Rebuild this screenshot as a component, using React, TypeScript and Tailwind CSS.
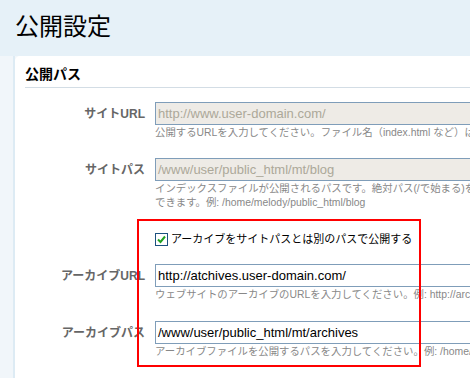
import React from "react";

const font = "font-['Liberation_Sans','Noto_Sans_CJK_JP',sans-serif]";

function Field({
  label,
  value,
  disabled,
  children,
  className,
}: {
  label: string;
  value: string;
  disabled?: boolean;
  children: React.ReactNode;
  className?: string;
}) {
  return (
    <div className={`grid grid-cols-[120px_1fr] gap-x-[10px] ${className ?? ""}`}>
      <div className="flex h-[23px] items-center justify-end text-[12px] font-bold text-[#666]">{label}</div>
      <div
        className={`flex h-[23px] w-[420px] items-center border border-[#7f9db9] px-[2px] text-[13px] whitespace-nowrap ${
          disabled ? "bg-[#eeebe6] text-[#aca899]" : "bg-white text-black"
        }`}
      >
        {value}
      </div>
      <div />
      <div className="mt-[1px] text-[10.4px] leading-[14px] whitespace-nowrap text-[#888]">{children}</div>
    </div>
  );
}

export default function App() {
  return (
    <div className={`relative h-[378px] w-[470px] overflow-hidden bg-[#f3f7fa] ${font}`}>
      {/* Header */}
      <header className="h-[56px] bg-[#e6f1f8] pt-[12px] pl-[15px] text-[24px] leading-[30px] text-black">
        公開設定
      </header>
      <div className="flex">
        {/* Left strip */}
        <div className="h-[322px] w-[15px] shrink-0 border-r-2 border-[#ddebf4] bg-[#f1f6fa]" />
        {/* Panel */}
        <section className="w-[600px] shrink-0 rounded-tl-[5px] bg-white pt-[10px] pl-[10px]">
          <h2 className="border-b border-[#d3dde5] pb-[5px] text-[14px] leading-[16px] font-bold text-black">公開パス</h2>

          <Field label="サイトURL" value="http://www.user-domain.com/" disabled className="mt-[14px]">
            公開するURLを入力してください。ファイル名（index.html など）は含めないでください。
          </Field>

          <Field label="サイトパス" value="/www/user/public_html/mt/blog" disabled className="mt-[18px]">
            インデックスファイルが公開されるパスです。絶対パス(/で始まる)を推奨しますが、相対パスも使用
            <br />
            できます。例: /home/melody/public_html/blog
          </Field>

          <div className="mt-[21px] grid grid-cols-[120px_1fr] gap-x-[10px]">
            <div />
            <label className="flex h-[16px] items-center gap-[3px] text-[11px] text-black">
              <span className="flex h-[13px] w-[13px] items-center justify-center border border-[#1c5180] bg-white">
                <svg width="9" height="9" viewBox="0 0 9 9">
                  <path d="M1 4.5 L3.5 7 L8 1.5" fill="none" stroke="#21a121" strokeWidth="2" />
                </svg>
              </span>
              アーカイブをサイトパスとは別のパスで公開する
            </label>
          </div>

          <Field label="アーカイブURL" value="http://atchives.user-domain.com/" className="mt-[17px]">
            ウェブサイトのアーカイブのURLを入力してください。例: http://archives.example.com/
          </Field>

          <Field label="アーカイブパス" value="/www/user/public_html/mt/archives" className="mt-[19px]">
            アーカイブファイルを公開するパスを入力してください。例: /home/melody/public_html/archives
          </Field>
        </section>
      </div>

      {/* Red highlight annotation */}
      <div className="absolute top-[219px] left-[137px] h-[148px] w-[284px] border-2 border-[#ff0000]" />
    </div>
  );
}
